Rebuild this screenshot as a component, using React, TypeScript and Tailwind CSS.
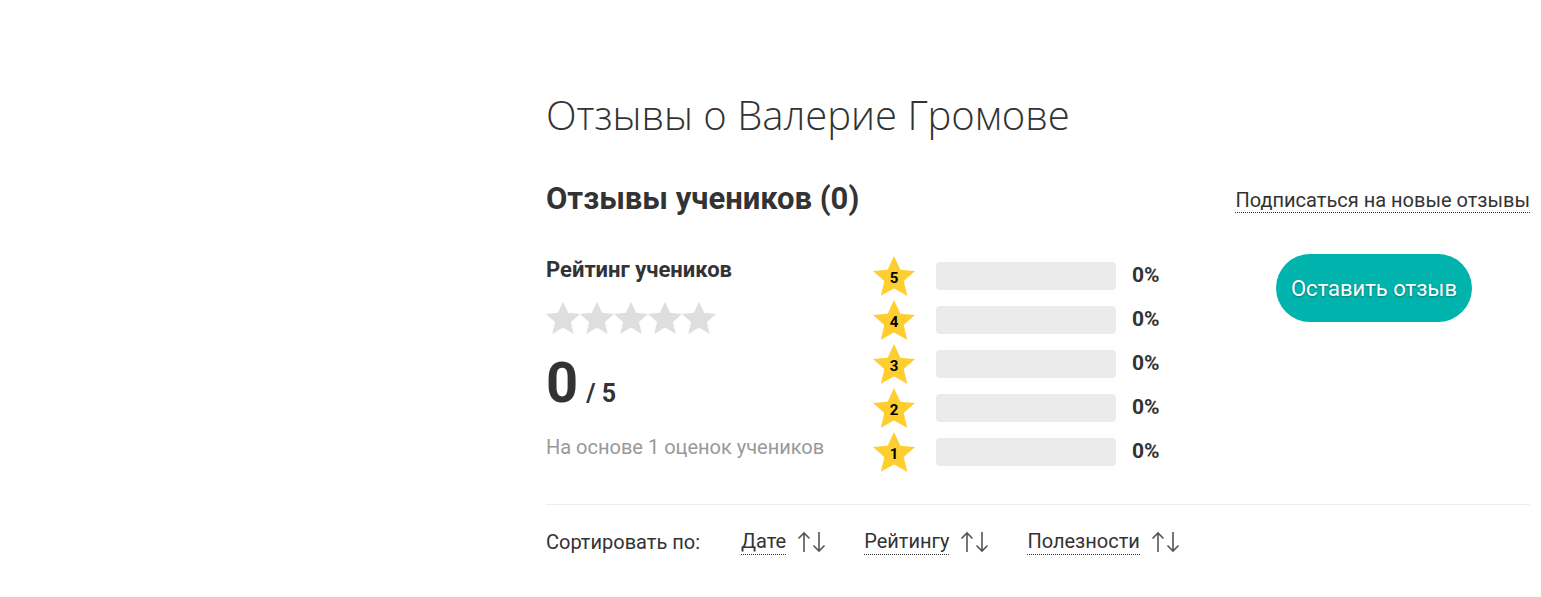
import React from "react";

const roboto = { fontFamily: "Roboto, 'Liberation Sans', sans-serif" };

function GrayStar() {
  return (
    <svg width="34" height="36" viewBox="1.2 1.4 21.6 21" className="block">
      <path
        d="M12 1.5l3.2 7.1 7.6.7-5.8 5.1 1.8 7.6L12 18l-6.8 4 1.8-7.6-5.8-5.1 7.6-.7z"
        fill="#dedede"
      />
    </svg>
  );
}

function YellowStar({ n }: { n: number }) {
  return (
    <div className="relative w-[42px] h-[42px] flex items-center justify-center">
      <svg width="42" height="42" viewBox="1 1 22 21" className="absolute inset-0">
        <path
          d="M12 1l3.3 7.2 7.7.7-5.9 5.2 1.8 7.8L12 18l-6.9 3.9 1.8-7.8L1 8.9l7.7-.7z"
          fill="#fecd2f"
        />
      </svg>
      <span className="relative text-[15px] font-bold text-black mt-[4px]">{n}</span>
    </div>
  );
}

function Arrows() {
  return (
    <svg width="30" height="22" viewBox="0 0 30 22" className="ml-[11px]" fill="none" stroke="#555" strokeWidth="1.6">
      <path d="M7 21V2M1.5 7.5L7 2l5.5 5.5" />
      <path d="M22 1v19M16.5 14.5L22 20l5.5-5.5" />
    </svg>
  );
}

function SortLink({ label }: { label: string }) {
  return (
    <div className="flex items-center">
      <span className="border-b border-dotted border-[#333] leading-[26px]">{label}</span>
      <Arrows />
    </div>
  );
}

export default function App() {
  const rows = [5, 4, 3, 2, 1];
  return (
    <div className="w-[1541px] h-[597px] bg-white text-[#333]" style={roboto}>
      <div className="ml-[546px] w-[984px] pt-[90px]">
        <h1
          className="text-[40px] font-light leading-[50px] text-[#333]"
          style={{ fontFamily: "'Open Sans', sans-serif" }}
        >
          Отзывы о Валерие Громове
        </h1>

        <div className="flex justify-between items-center mt-[41px] h-[36px]">
          <h2 className="text-[31px] font-bold leading-[36px] text-[#333]">Отзывы учеников (0)</h2>
          <a className="text-[20px] text-[#333] leading-[24px] border-b border-dotted border-[#333] mt-[2px]">
            Подписаться на новые отзывы
          </a>
        </div>

        <div className="flex mt-[38px]">
          <div className="w-[327px] pt-[3px]">
            <div className="text-[22px] font-bold leading-[24px]">Рейтинг учеников</div>
            <div className="flex mt-[18px]">
              {[0, 1, 2, 3, 4].map((i) => (
                <GrayStar key={i} />
              ))}
            </div>
            <div className="flex items-baseline mt-[17px]">
              <span className="text-[56px] font-bold leading-[60px] text-[#333]">0</span>
              <span className="text-[25px] font-bold ml-[8px]">/ 5</span>
            </div>
            <div className="text-[20px] text-[#999] mt-[22px] leading-[24px]">На основе 1 оценок учеников</div>
          </div>

          <div className="flex flex-col gap-[2px]">
            {rows.map((n) => (
              <div key={n} className="flex items-center h-[42px]">
                <YellowStar n={n} />
                <div className="ml-[21px] w-[180px] h-[28px] rounded-[4px] bg-[#ebebeb]" />
                <div className="ml-[16px] text-[21px] font-bold">0%</div>
              </div>
            ))}
          </div>

          <div className="flex-1 flex justify-end pr-[58px]">
            <button
              className="w-[196px] h-[68px] rounded-full bg-[#00b3ac] text-white text-[22px] -mt-[1px]"
              style={{ textShadow: "0 1px 2px rgba(0,0,0,0.3)" }}
            >
              Оставить отзыв
            </button>
          </div>
        </div>

        <div className="mt-[31px] border-t border-[#eee]" />

        <div className="flex items-center mt-[23px] text-[20px] text-[#333]">
          <span className="w-[195px] leading-[26px]">Сортировать по:</span>
          <div className="flex gap-[37px]">
            <SortLink label="Дате" />
            <SortLink label="Рейтингу" />
            <SortLink label="Полезности" />
          </div>
        </div>
      </div>
    </div>
  );
}
